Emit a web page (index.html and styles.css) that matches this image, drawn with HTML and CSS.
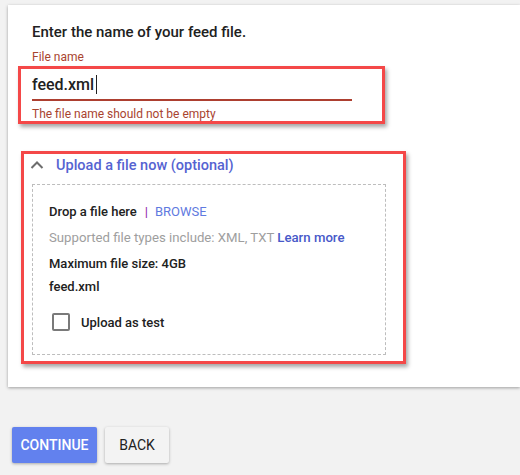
FILE: index.html
```html
<!DOCTYPE html>
<html>
<head>
<meta charset="utf-8">
<link rel="stylesheet" href="styles.css">
</head>
<body>
<div class="card">
  <h1 class="title">Enter the name of your feed file.</h1>
  <div class="label">File name</div>
  <div class="mark mark-name">
    <div class="input"><span>feed.xml</span><span class="caret"></span></div>
    <div class="underline"></div>
    <div class="error">The file name should not be empty</div>
  </div>
  <div class="mark mark-upload">
    <div class="toggle">
      <svg class="chev" width="14" height="10" viewBox="0 0 14 10"><path d="M1.5 8 L7 2.5 L12.5 8" fill="none" stroke="#6d6d6d" stroke-width="2"/></svg>
      <span>Upload a file now (optional)</span>
    </div>
    <div class="drop">
      <div class="row row-drop"><span class="strong">Drop a file here</span><span class="sep">|</span><span class="browse">BROWSE</span></div>
      <div class="row row-types">Supported file types include: XML, TXT <span class="learn">Learn more</span></div>
      <div class="row row-size strong">Maximum file size: 4GB</div>
      <div class="row row-file strong">feed.xml</div>
      <label class="check"><span class="box"></span><span class="strong">Upload as test</span></label>
    </div>
  </div>
</div>
<div class="actions">
  <button class="btn primary">CONTINUE</button>
  <button class="btn secondary">BACK</button>
</div>
</body>
</html>
```
FILE: styles.css
```css
* { box-sizing: border-box; }
html, body { margin: 0; padding: 0; }
body {
  background: #f2f2f2;
  font-family: Roboto, "Liberation Sans", Arial, sans-serif;
  color: #212121;
  width: 520px;
  height: 475px;
  overflow: hidden;
}
.card {
  margin: 5px 0 0 8px;
  width: 512px;
  height: 382px;
  background: #fff;
  box-shadow: 0 1px 3px rgba(0,0,0,0.35);
  padding-top: 17px;
}
.title {
  margin: 0 0 0 24px;
  font-size: 15px;
  line-height: 20px;
  font-weight: 500;
  color: #212121;
}
.label {
  margin: 7px 0 0 24px;
  font-size: 12px;
  line-height: 16px;
  color: #a9442f;
}
.mark {
  border: 3px solid #f44848;
  box-shadow: 2px 3px 4px rgba(0,0,0,0.35);
}
.mark-name {
  margin: 1px 0 0 10px;
  width: 367px;
  height: 58px;
  padding: 5px 0 0 11px;
}
.input {
  display: flex;
  align-items: center;
  height: 20px;
  font-size: 16px;
  font-weight: 500;
  color: #212121;
}
.caret {
  display: inline-block;
  width: 1px;
  height: 19px;
  background: #212121;
  margin-left: 2px;
}
.underline {
  margin-top: 5px;
  width: 320px;
  height: 2px;
  background: #ad3f30;
}
.error {
  margin-top: 5px;
  font-size: 12px;
  line-height: 16px;
  color: #a9442f;
}
.mark-upload {
  margin: 27px 0 0 13px;
  width: 385px;
  height: 213px;
  padding: 1px 0 0 8px;
}
.toggle {
  display: flex;
  align-items: center;
  height: 20px;
  font-size: 14.5px;
  font-weight: 500;
  color: #5563d1;
}
.chev { margin-left: -2px; margin-right: 12px; }
.drop {
  margin-top: 9px;
  width: 354px;
  height: 171px;
  border: 1px dashed #bdbdbd;
  padding: 18px 0 0 16px;
  font-size: 13px;
}
.row { line-height: 18px; }
.strong { font-weight: 500; color: #212121; }
.sep { color: #8e24aa; margin: 0 7px 0 8px; }
.browse { color: #5f7ae0; font-size: 13px; }
.row-types { margin-top: 8px; color: #9e9e9e; font-size: 13.2px; }
.learn { color: #4759c9; font-weight: 500; }
.row-size { margin-top: 8px; }
.row-file { margin-top: 5px; }
.check {
  margin-top: 17px;
  display: flex;
  align-items: center;
  height: 18px;
}
.box {
  width: 18px;
  height: 18px;
  margin-left: 3px;
  margin-right: 11px;
  border: 2px solid #7a7a7a;
  border-radius: 2px;
}
.actions {
  display: flex;
  gap: 8px;
  margin: 40px 0 0 12px;
}
.btn {
  height: 36px;
  border: none;
  border-radius: 2px;
  font-family: Roboto, "Liberation Sans", Arial, sans-serif;
  font-size: 14px;
  font-weight: 500;
  padding: 0;
  box-shadow: 0 1px 3px rgba(0,0,0,0.3);
}
.primary { width: 85px; background: #6281ee; color: #fff; }
.secondary { width: 64px; background: #f3f3f3; color: #212121; font-weight: 400; }
```
